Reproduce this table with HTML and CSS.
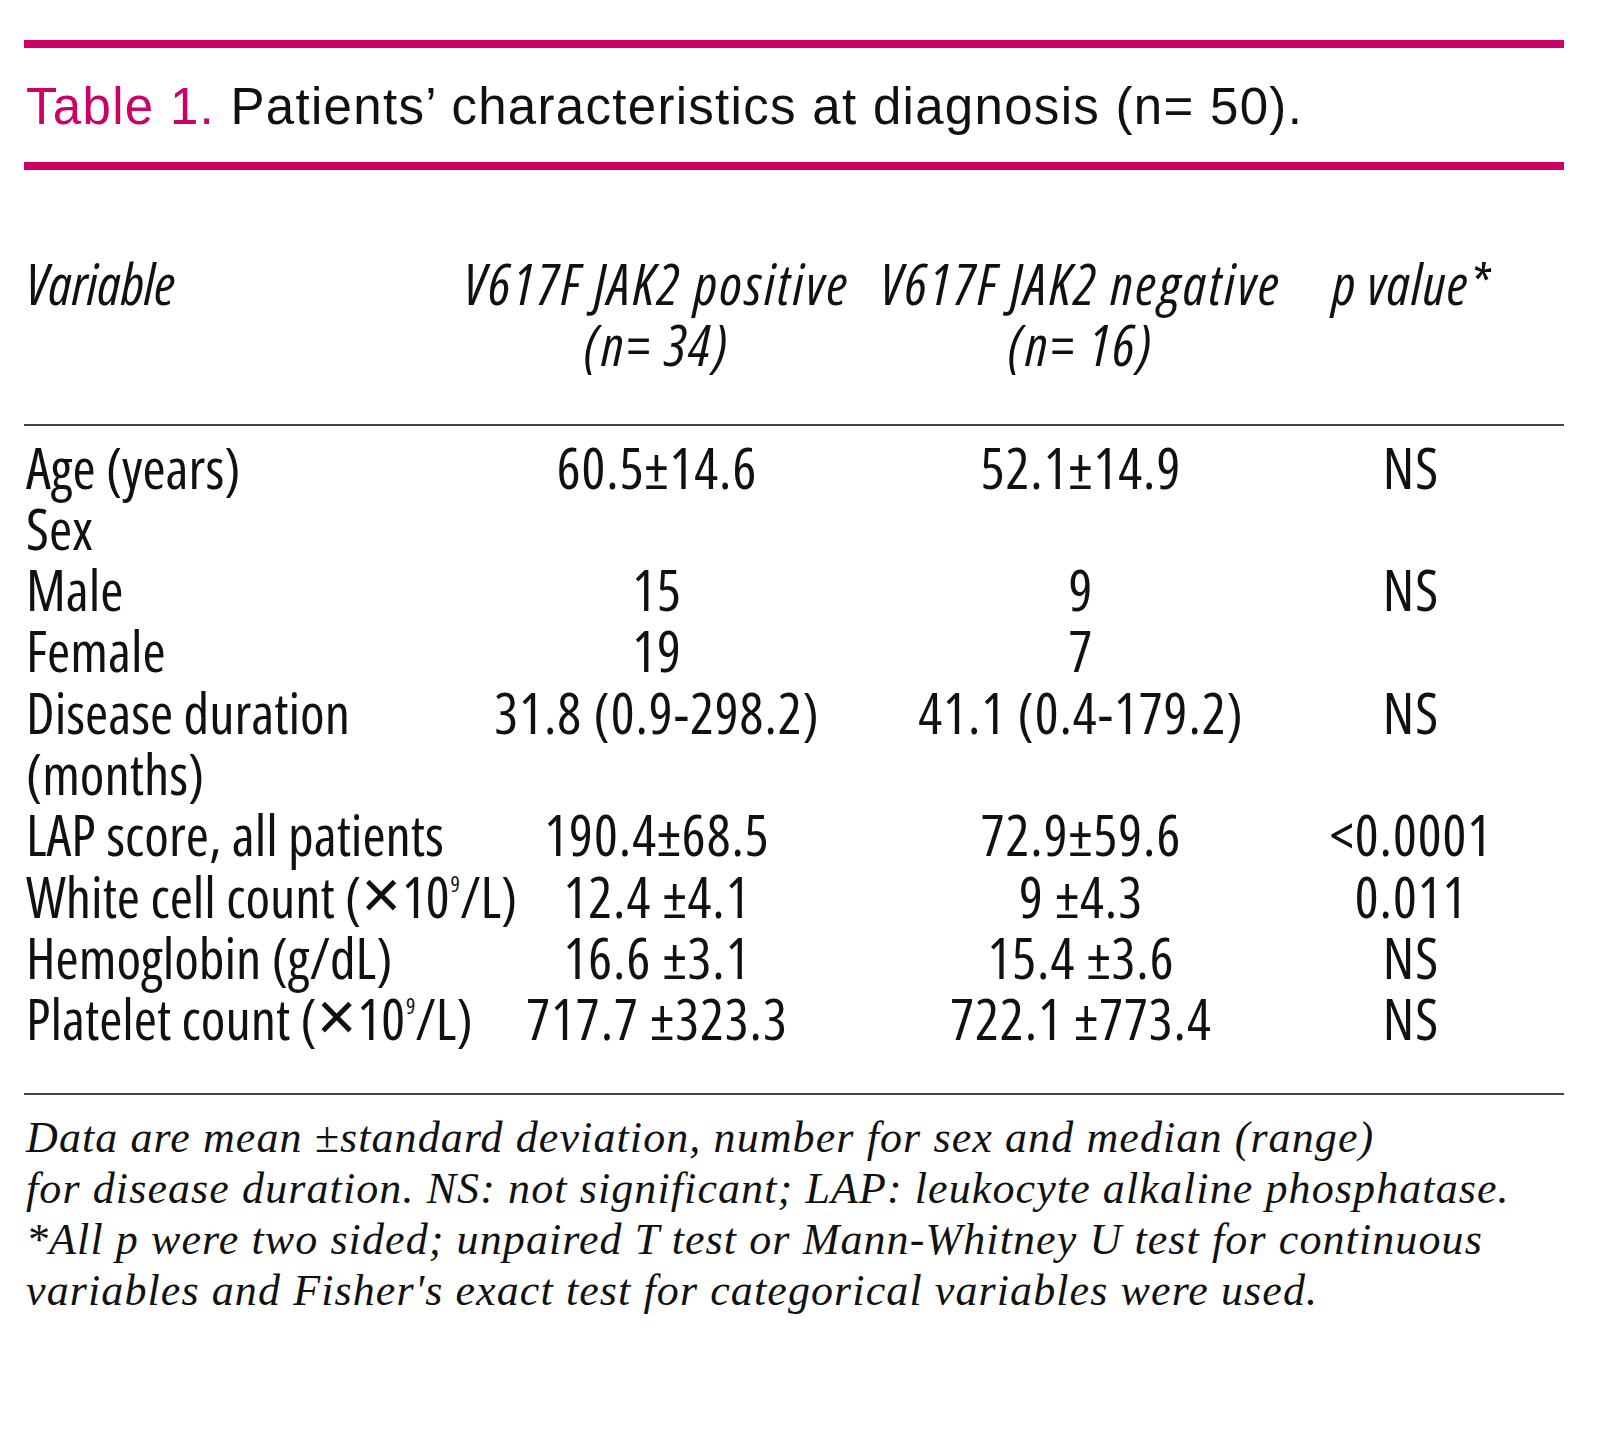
FILE: index.html
```html
<!DOCTYPE html>
<html lang="en">
<head>
<meta charset="utf-8">
<title>Table 1</title>
<link rel="stylesheet" href="styles.css">
</head>
<body>
<div class="page">
  <div class="pink-rule"></div>
  <h1 class="title"><span class="label">Table 1.</span> Patients’ characteristics at diagnosis (n= 50).</h1>
  <div class="pink-rule second"></div>

  <div class="grid head">
    <div class="c1">Variable</div>
    <div class="c wide">V617F JAK2 positive<br>(n= 34)</div>
    <div class="c wide">V617F JAK2 negative<br>(n= 16)</div>
    <div class="c pv">p value*</div>
  </div>
  <div class="gray-rule"></div>

  <div class="grid body">
    <div class="c1">Age (years)</div><div class="c">60.5±14.6</div><div class="c">52.1±14.9</div><div class="c">NS</div>
    <div class="c1">Sex</div><div class="c"></div><div class="c"></div><div class="c"></div>
    <div class="c1">Male</div><div class="c">15</div><div class="c">9</div><div class="c">NS</div>
    <div class="c1">Female</div><div class="c">19</div><div class="c">7</div><div class="c"></div>
    <div class="c1">Disease duration<br>(months)</div><div class="c">31.8 (0.9-298.2)</div><div class="c">41.1 (0.4-179.2)</div><div class="c">NS</div>
    <div class="c1">LAP score, all patients</div><div class="c">190.4±68.5</div><div class="c">72.9±59.6</div><div class="c">&lt;0.0001</div>
    <div class="c1">White cell count (<span class="times">×</span>10<sup>9</sup>/L)</div><div class="c">12.4 ±4.1</div><div class="c">9 ±4.3</div><div class="c">0.011</div>
    <div class="c1">Hemoglobin (g/dL)</div><div class="c">16.6 ±3.1</div><div class="c">15.4 ±3.6</div><div class="c">NS</div>
    <div class="c1">Platelet count (<span class="times">×</span>10<sup>9</sup>/L)</div><div class="c">717.7 ±323.3</div><div class="c">722.1 ±773.4</div><div class="c">NS</div>
  </div>
  <div class="gray-rule bottom"></div>

  <p class="note">Data are mean ±standard deviation, number for sex and median (range)<br>for disease duration. NS: not significant; LAP: leukocyte alkaline phosphatase.<br>*All p were two sided; unpaired T test or Mann-Whitney U test for continuous<br>variables and Fisher's exact test for categorical variables were used.</p>
</div>
</body>
</html>
```
FILE: styles.css
```css
html, body {
  margin: 0;
  padding: 0;
  background: #ffffff;
}

.page {
  width: 1540px;
  margin-left: 24px;
  padding-top: 40px;
  color: #111111;
}

.pink-rule {
  height: 8px;
  background: #cc0066;
}

.title {
  margin: 29px 0 25px 2px;
  font-family: "Liberation Sans", Arial, sans-serif;
  font-weight: normal;
  font-size: 51px;
  line-height: 60px;
  letter-spacing: 1.3px;
  color: #111111;
  white-space: nowrap;
}

.title .label {
  color: #cc0066;
}

.grid {
  display: grid;
  grid-template-columns: 433px 400px 448px 212px;
  font-family: "Open Sans", sans-serif;
  font-stretch: 75%;
  font-size: 56px;
  line-height: 61.3px;
  white-space: nowrap;
}

.grid .c1 {
  padding-left: 2px;
}

.grid .c {
  text-align: center;
}

.head {
  margin-top: 83px;
  margin-bottom: 48px;
  font-style: italic;
}

.head .wide {
  letter-spacing: 2.5px;
}

.head .pv {
  letter-spacing: 1.2px;
}

.gray-rule {
  height: 2px;
  background: #444444;
}

.body {
  margin-top: 11px;
}

.body .c {
  letter-spacing: 1px;
}

.body .times {
  font-family: "Liberation Sans", Arial, sans-serif;
  font-size: 68px;
  font-weight: normal;
  line-height: 0;
  margin: 0 1px 0 0;
}

.body sup {
  font-size: 22px;
  line-height: 0;
  vertical-align: 26px;
  margin-left: 1px;
}

.gray-rule.bottom {
  margin-top: 43px;
}

.note {
  margin: 17px 0 0 2px;
  font-family: "Liberation Serif", "Times New Roman", serif;
  font-style: italic;
  font-size: 44px;
  line-height: 51.1px;
  letter-spacing: 1.1px;
  color: #111111;
  white-space: nowrap;
}
```
